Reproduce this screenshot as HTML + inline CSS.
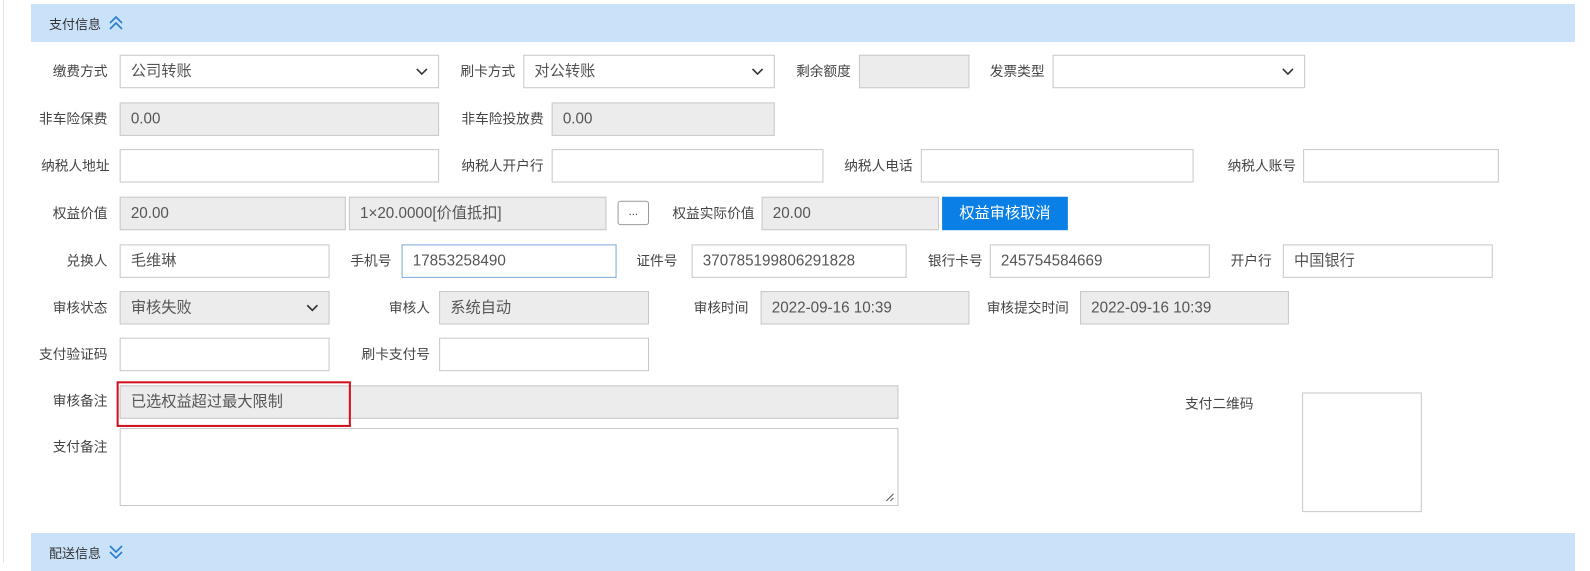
<!DOCTYPE html>
<html><head><meta charset="utf-8"><style>
body{margin:0;width:1590px;height:563px;background:#fff;position:relative;overflow:hidden;font-family:"Liberation Sans","Noto Sans CJK SC",sans-serif}
.hd{position:absolute;left:31px;width:1544px;height:38px;background:#c9e2f9;font-size:13px;color:#333}
.hd span{position:absolute;left:18px;top:10px}
.hd svg{position:absolute;left:78px;top:11px}
#w{position:absolute;left:0;top:0;width:1568px;height:555px;transform:scale(1.0141);transform-origin:0 0}
.l{position:absolute;font-size:13.5px;color:#444;text-align:right;white-space:nowrap;line-height:33px;height:33px}
.i{position:absolute;box-sizing:border-box;border:1px solid #c8c8c8;background:#fff;height:33px;font-size:15px;color:#555;line-height:31px;padding-left:10px;white-space:nowrap}
.g{background:#ececec}
.s svg{position:absolute;right:10px;top:12px}
</style></head><body>
<div style="position:absolute;left:3px;top:0;width:1px;height:563px;background:#e4e4e4"></div>
<div class="hd" style="top:4px"><span>支付信息</span><svg width="14" height="16" viewBox="0 0 14 16"><path d="M1 8L7 2L13 8M1 14L7 8L13 14" fill="none" stroke="#2a7bd0" stroke-width="1.6"/></svg></div>
<div id="w">
<!-- row1 -->
<div class="l" style="right:1462px;top:54px">缴费方式</div>
<div class="i s" style="left:118px;top:54px;width:315px">公司转账<svg width="12" height="8"><path d="M1 1L6 6L11 1" fill="none" stroke="#333" stroke-width="1.6"/></svg></div>
<div class="l" style="right:1060px;top:54px">刷卡方式</div>
<div class="i s" style="left:516px;top:54px;width:248px">对公转账<svg width="12" height="8"><path d="M1 1L6 6L11 1" fill="none" stroke="#333" stroke-width="1.6"/></svg></div>
<div class="l" style="right:729px;top:54px">剩余额度</div>
<div class="i g" style="left:847px;top:54px;width:109px"></div>
<div class="l" style="right:538px;top:54px">发票类型</div>
<div class="i s" style="left:1038px;top:54px;width:249px"><svg width="12" height="8"><path d="M1 1L6 6L11 1" fill="none" stroke="#333" stroke-width="1.6"/></svg></div>

<!-- row2 -->
<div class="l" style="right:1462px;top:101px">非车险保费</div>
<div class="i g" style="left:118px;top:101px;width:315px">0.00</div>
<div class="l" style="right:1032px;top:101px">非车险投放费</div>
<div class="i g" style="left:544px;top:101px;width:220px">0.00</div>

<!-- row3 -->
<div class="l" style="right:1460px;top:147px">纳税人地址</div>
<div class="i" style="left:118px;top:147px;width:315px"></div>
<div class="l" style="right:1032px;top:147px">纳税人开户行</div>
<div class="i" style="left:544px;top:147px;width:268px"></div>
<div class="l" style="right:668px;top:147px">纳税人电话</div>
<div class="i" style="left:908px;top:147px;width:269px"></div>
<div class="l" style="right:290px;top:147px">纳税人账号</div>
<div class="i" style="left:1285px;top:147px;width:193px"></div>

<!-- row4 -->
<div class="l" style="right:1462px;top:194px">权益价值</div>
<div class="i g" style="left:118px;top:194px;width:223px">20.00</div>
<div class="i g" style="left:344px;top:194px;width:254px">1×20.0000[价值抵扣]</div>
<div style="position:absolute;left:609px;top:198px;width:31px;height:24px;box-sizing:border-box;border:1px solid #999;border-radius:3px;font-size:11px;text-align:center;line-height:20px;color:#333">...</div>
<div class="l" style="right:824px;top:194px">权益实际价值</div>
<div class="i g" style="left:751px;top:194px;width:175px">20.00</div>
<div style="position:absolute;left:929px;top:194px;width:124px;height:33px;background:#0a7fe6;color:#fff;font-size:15px;line-height:33px;text-align:center">权益审核取消</div>

<!-- row5 -->
<div class="l" style="right:1462px;top:241px">兑换人</div>
<div class="i" style="left:118px;top:241px;width:207px">毛维琳</div>
<div class="l" style="right:1182px;top:241px">手机号</div>
<div class="i" style="left:396px;top:241px;width:212px;border-color:#7aa9dc">17853258490</div>
<div class="l" style="right:900px;top:241px">证件号</div>
<div class="i" style="left:682px;top:241px;width:212px">370785199806291828</div>
<div class="l" style="right:599px;top:241px">银行卡号</div>
<div class="i" style="left:976px;top:241px;width:217px">245754584669</div>
<div class="l" style="right:314px;top:241px">开户行</div>
<div class="i" style="left:1265px;top:241px;width:207px">中国银行</div>

<!-- row6 -->
<div class="l" style="right:1462px;top:287px">审核状态</div>
<div class="i g s" style="left:118px;top:287px;width:207px">审核失败<svg width="12" height="8"><path d="M1 1L6 6L11 1" fill="none" stroke="#333" stroke-width="1.6"/></svg></div>
<div class="l" style="right:1144px;top:287px">审核人</div>
<div class="i g" style="left:433px;top:287px;width:207px">系统自动</div>
<div class="l" style="right:830px;top:287px">审核时间</div>
<div class="i g" style="left:750px;top:287px;width:206px">2022-09-16 10:39</div>
<div class="l" style="right:514px;top:287px">审核提交时间</div>
<div class="i g" style="left:1065px;top:287px;width:206px">2022-09-16 10:39</div>

<!-- row7 -->
<div class="l" style="right:1462px;top:333px">支付验证码</div>
<div class="i" style="left:118px;top:333px;width:207px"></div>
<div class="l" style="right:1144px;top:333px">刷卡支付号</div>
<div class="i" style="left:433px;top:333px;width:207px"></div>

<!-- row8 -->
<div class="l" style="right:1462px;top:379px">审核备注</div>
<div class="i g" style="left:118px;top:380px;width:768px">已选权益超过最大限制</div>
<div style="position:absolute;left:115px;top:376px;width:231px;height:45px;box-sizing:border-box;border:2px solid #d0101e"></div>
<div class="l" style="right:1462px;top:424px">支付备注</div>
<div class="i" style="left:118px;top:422px;width:768px;height:77px"><svg style="position:absolute;right:3px;bottom:3px" width="10" height="10"><path d="M9 2L2 9M9 6L6 9" stroke="#555" stroke-width="1"/></svg></div>
<div class="l" style="right:332px;top:382px">支付二维码</div>
<div class="i" style="left:1284px;top:387px;width:118px;height:118px"></div>
</div>
<div class="hd" style="top:533px"><span>配送信息</span><svg width="14" height="16" viewBox="0 0 14 16"><path d="M1 2L7 8L13 2M1 8L7 14L13 8" fill="none" stroke="#2a7bd0" stroke-width="1.6"/></svg></div>
</body></html>
